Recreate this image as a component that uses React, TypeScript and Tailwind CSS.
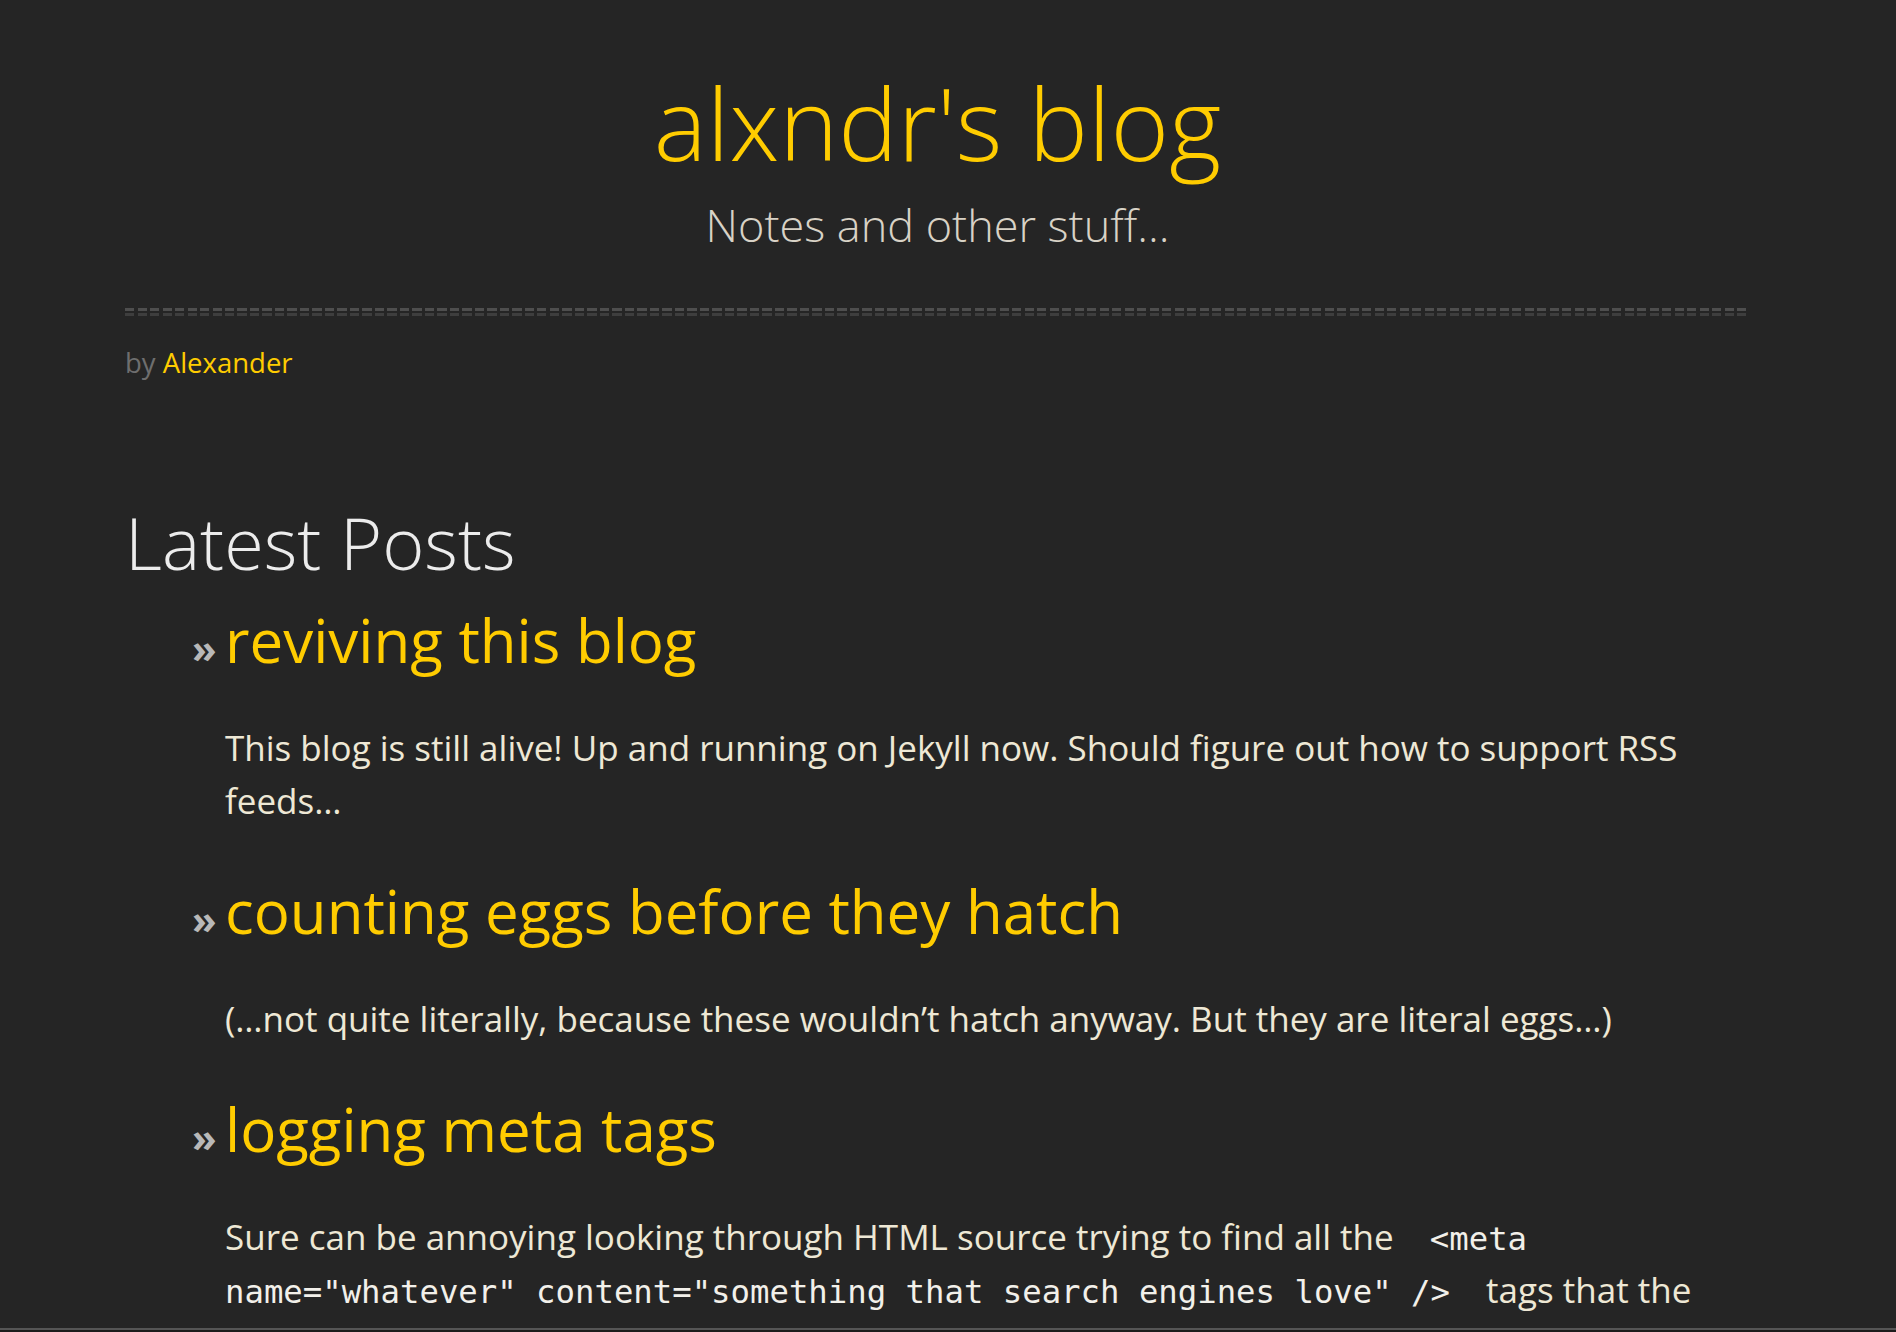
const posts = [
  {
    title: "reviving this blog",
    excerpt: (
      <>
        This blog is still alive! Up and running on Jekyll now. Should figure out how to support RSS
        feeds…
      </>
    ),
  },
  {
    title: "counting eggs before they hatch",
    excerpt: (
      <>(…not quite literally, because these wouldn’t hatch anyway. But they are literal eggs…)</>
    ),
  },
  {
    title: "logging meta tags",
    excerpt: (
      <>
        Sure can be annoying looking through HTML source trying to find all the{" "}
        <code className="px-[27px] font-['DejaVu_Sans_Mono',monospace] text-[32.3px] leading-none text-[#f2f0ea]">
          &lt;meta name="whatever" content="something that search engines love" /&gt;
        </code>{" "}
        tags that the page has, so here is a tiny snippet that logs them all to the console instead.
      </>
    ),
  },
];

function Rule() {
  return (
    <div className="flex flex-col gap-[2px]">
      <div className="h-[3px] bg-[repeating-linear-gradient(90deg,#4e4e4e_0_9px,transparent_9px_12.5px)]" />
      <div className="h-[3px] bg-[repeating-linear-gradient(90deg,#3e3e3e_0_9px,transparent_9px_12.5px)]" />
    </div>
  );
}

export default function App() {
  return (
    <div className="relative h-screen overflow-hidden bg-[#252525] font-['Open_Sans',sans-serif]">
      <div className="ml-[125px] w-[1625px] pt-[62px]">
        <header className="flex flex-col items-center">
          <h1 className="text-[100px] font-light leading-[1.2] text-[#ffcc00]">alxndr's blog</h1>
          <p className="mt-[16px] text-[45px] font-light leading-[1.2] text-[#d8d2c6]">
            Notes and other stuff…
          </p>
        </header>

        <div className="mt-[56px]">
          <Rule />
        </div>

        <p className="mt-[26px] text-[27.5px] leading-[1.5] text-[#6e6e6e]">
          by <span className="text-[#ffcc00]">Alexander</span>
        </p>

        <main className="mt-[116px]">
          <h2 className="text-[72px] font-light leading-[1.2] text-[#ececec]">Latest Posts</h2>
          <ul className="mt-[18px] flex flex-col gap-[48px] pl-[67px]">
            {posts.map((post) => (
              <li key={post.title} className="flex items-baseline gap-[10px]">
                <span className="w-[23px] shrink-0 text-[40px] font-bold leading-none text-[#b8b8b8]">
                  »
                </span>
                <div className="flex-1">
                  <h3 className="text-[60px] leading-[1.2] text-[#ffcc00]">{post.title}</h3>
                  <p className="mt-[45px] text-[35px] leading-[53px] text-[#eee8d5]">{post.excerpt}</p>
                </div>
              </li>
            ))}
          </ul>
        </main>
      </div>

      <div className="absolute bottom-0 left-0 h-[4px] w-full border-t-2 border-[#555555] bg-[#1c1c1c]" />
    </div>
  );
}
